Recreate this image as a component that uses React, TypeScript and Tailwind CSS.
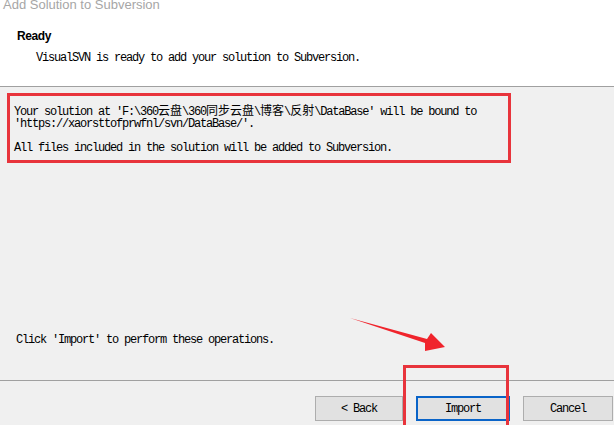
export default function App() {
  const mono = "font-['Liberation_Mono','Noto_Sans_CJK_SC',monospace] text-[12px] tracking-[-1.2px] leading-[12px] text-black";
  const cjk = "tracking-normal font-['Noto_Sans_CJK_SC',sans-serif]";

  return (
    <div className="relative w-[614px] h-[425px] overflow-hidden bg-[#f0f0f0] flex flex-col font-['Liberation_Sans',sans-serif]">
      {/* header */}
      <div className="h-[87px] bg-white border-b border-[#a0a0a0] shrink-0">
        <div className="-mt-[3px] pl-[3px] text-[13px] leading-[16px] text-[#a6a6a6]">
          Add Solution to Subversion
        </div>
        <div className="mt-[16px] pl-[17px] text-[12px] leading-[14px] font-bold tracking-[-0.4px] text-black">
          Ready
        </div>
        <div className={`mt-[9px] pl-[36px] ${mono}`}>
          VisualSVN is ready to add your solution to Subversion.
        </div>
      </div>

      {/* body */}
      <div className="flex-1 flex flex-col">
        <div className="mt-[6px] ml-[7px] w-[504px] h-[70px] border-[3px] border-[#e8343c] pl-[4px] pt-[8px]">
          <div className={mono}>
            Your solution at 'F:\360<span className={cjk}>云盘</span>\360<span className={cjk}>同步云盘</span>\<span className={cjk}>博客</span>\<span className={cjk}>反射</span>\DataBase' will be bound to
          </div>
          <div className={mono}>'https://xaorsttofprwfnl/svn/DataBase/'.</div>
          <div className={`mt-[12px] ${mono}`}>All files included in the solution will be added to Subversion.</div>
        </div>
        <div className={`mt-auto mb-[34px] pl-[16px] ${mono}`}>
          Click 'Import' to perform these operations.
        </div>
      </div>

      {/* footer */}
      <div className="h-[45px] border-t border-[#a0a0a0] shrink-0 flex items-start pt-[15px] pl-[315px] gap-[13px]">
        <button className={`w-[88px] h-[25px] bg-[#e1e1e1] border border-[#adadad] ${mono}`}>&lt; Back</button>
        <button className={`w-[94px] h-[25px] bg-[#e1e1e1] border-2 border-[#0a64c8] ${mono}`}>Import</button>
        <button className={`w-[90px] h-[25px] bg-[#e1e1e1] border border-[#adadad] ${mono}`}>Cancel</button>
      </div>

      {/* annotations */}
      <div className="absolute left-[403px] top-[365px] w-[106px] h-[70px] border-[3px] border-[#e8343c]" />
      <svg className="absolute left-0 top-0" width="614" height="425" viewBox="0 0 614 425">
        <polygon
          points="350,318 427,339 431,333 445,347 425,351 425,343"
          fill="#f0242c"
        />
      </svg>
    </div>
  );
}
